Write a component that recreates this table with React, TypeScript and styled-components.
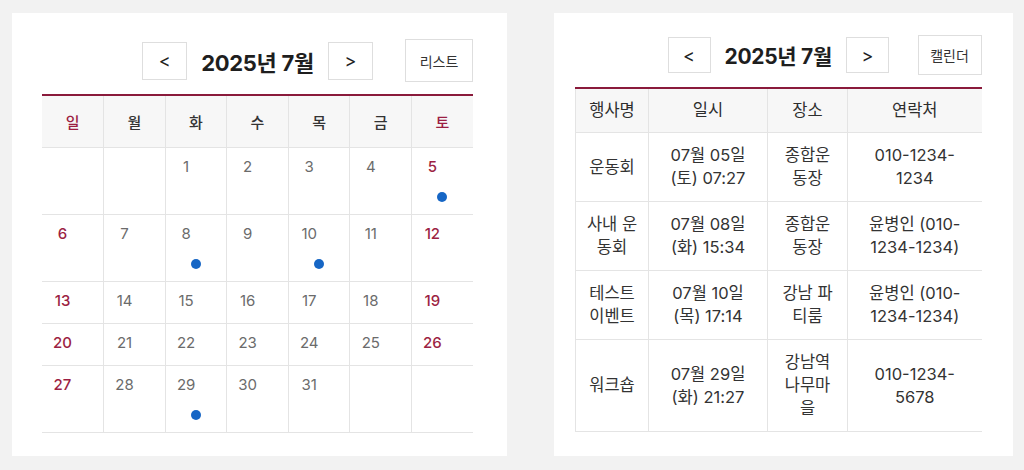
import React from "react";
import styled, { createGlobalStyle } from "styled-components";

const maroon = "#8a1a3b";
const weekendRed = "#9c1f43";
const lineGray = "#e4e4e4";
const headBg = "#f7f7f7";
const dotBlue = "#1666c5";

const GlobalStyle = createGlobalStyle`
  body {
    margin: 0;
    background: #f2f2f2;
    font-family: Inter, "Noto Sans CJK KR", sans-serif;
    color: #333;
  }
`;

const days = ["일", "월", "화", "수", "목", "금", "토"];
const eventDays = [5, 8, 10, 29];

// July 2025 starts on a Tuesday
const weeks: (number | null)[][] = [
  [null, null, 1, 2, 3, 4, 5],
  [6, 7, 8, 9, 10, 11, 12],
  [13, 14, 15, 16, 17, 18, 19],
  [20, 21, 22, 23, 24, 25, 26],
  [27, 28, 29, 30, 31, null, null],
];

const events = [
  { name: "운동회", date: "07월 05일 (토) 07:27", place: "종합운동장", contact: "010-1234-1234" },
  { name: "사내 운동회", date: "07월 08일 (화) 15:34", place: "종합운동장", contact: "윤병인 (010-1234-1234)" },
  { name: "테스트 이벤트", date: "07월 10일 (목) 17:14", place: "강남 파티룸", contact: "윤병인 (010-1234-1234)" },
  { name: "워크숍", date: "07월 29일 (화) 21:27", place: "강남역나무마을", contact: "010-1234-5678" },
];

type NavProps = { switchLabel: string; compact?: boolean };

const Nav = ({ switchLabel, compact }: NavProps) => (
  <NavBar $compact={compact}>
    <span />
    <NavGroup>
      <ArrowButton $compact={compact}>&lt;</ArrowButton>
      <Title $compact={compact}>2025년 7월</Title>
      <ArrowButton $compact={compact}>&gt;</ArrowButton>
    </NavGroup>
    <SwitchButton $compact={compact}>{switchLabel}</SwitchButton>
  </NavBar>
);

const CalendarView = () => (
  <Card $pad="26px 34px 24px 30px">
    <Nav switchLabel="리스트" />
    <CalTable>
      <thead>
        <tr>
          {days.map((d, i) => (
            <DayHead key={d} $weekend={i === 0 || i === 6}>
              {d}
            </DayHead>
          ))}
        </tr>
      </thead>
      <tbody>
        {weeks.map((week, wi) => (
          <tr key={wi}>
            {week.map((day, di) => (
              <DateCell key={di} $weekend={di === 0 || di === 6}>
                {day && <DayNum>{day}</DayNum>}
                {day && eventDays.includes(day) && <Dot />}
              </DateCell>
            ))}
          </tr>
        ))}
      </tbody>
    </CalTable>
  </Card>
);

const ListView = () => (
  <Card $pad="22px 31px 23px 21px">
    <Nav switchLabel="캘린더" compact />
    <ListTable>
      <colgroup>
        <col style={{ width: 73 }} />
        <col style={{ width: 119 }} />
        <col style={{ width: 80 }} />
        <col style={{ width: 134 }} />
      </colgroup>
      <thead>
        <tr>
          <ListHead>행사명</ListHead>
          <ListHead>일시</ListHead>
          <ListHead>장소</ListHead>
          <ListHead>연락처</ListHead>
        </tr>
      </thead>
      <tbody>
        {events.map((ev) => (
          <tr key={ev.name}>
            <ListCell>{ev.name}</ListCell>
            <ListCell>{ev.date}</ListCell>
            <ListCell>{ev.place}</ListCell>
            <ListCell>{ev.contact}</ListCell>
          </tr>
        ))}
      </tbody>
    </ListTable>
  </Card>
);

const App = () => (
  <>
    <GlobalStyle />
    <Page>
      <CalendarView />
      <ListView />
    </Page>
  </>
);

const Page = styled.div`
  display: flex;
  gap: 47px;
  padding: 13px 0 0 12px;
  height: 443px;
`;

const Card = styled.section<{ $pad: string }>`
  background: #fff;
  padding: ${(p) => p.$pad};
  box-sizing: border-box;
  display: flex;
  flex-direction: column;
`;

const NavBar = styled.div<{ $compact?: boolean }>`
  display: grid;
  grid-template-columns: 1fr auto 1fr;
  align-items: center;
  height: ${(p) => (p.$compact ? "40px" : "43px")};
  margin-bottom: 12px;
`;

const NavGroup = styled.div`
  display: flex;
  align-items: center;
  gap: 14px;
`;

const ArrowButton = styled.button<{ $compact?: boolean }>`
  width: ${(p) => (p.$compact ? "43px" : "45px")};
  height: ${(p) => (p.$compact ? "36px" : "38px")};
  background: #fff;
  border: 1px solid #dedede;
  border-radius: 0;
  padding: 0;
  font-family: Inter, sans-serif;
  font-size: 18px;
  color: #222;
`;

const Title = styled.h2<{ $compact?: boolean }>`
  margin: 0;
  font-size: ${(p) => (p.$compact ? "21px" : "22px")};
  font-weight: 700;
  color: #1e1e1e;
  letter-spacing: -0.3px;
  white-space: nowrap;
`;

const SwitchButton = styled.button<{ $compact?: boolean }>`
  justify-self: end;
  width: ${(p) => (p.$compact ? "64px" : "68px")};
  height: ${(p) => (p.$compact ? "40px" : "43px")};
  background: #fff;
  border: 1px solid #dedede;
  border-radius: 0;
  padding: 0;
  font-family: inherit;
  font-size: 14px;
  color: #333;
`;

const CalTable = styled.table`
  width: 431px;
  table-layout: fixed;
  border-collapse: collapse;
  border-top: 2px solid ${maroon};
`;

const DayHead = styled.th<{ $weekend?: boolean }>`
  height: 51px;
  padding: 0;
  background: ${headBg};
  font-size: 15px;
  font-weight: 500;
  color: ${(p) => (p.$weekend ? weekendRed : "#333")};
  border-left: 1px solid ${lineGray};
  border-bottom: 1px solid ${lineGray};
  &:first-child {
    border-left: none;
  }
`;

const DateCell = styled.td<{ $weekend?: boolean }>`
  vertical-align: top;
  text-align: left;
  padding: 9px 8px 12px;
  line-height: 20px;
  font-size: 15px;
  font-weight: ${(p) => (p.$weekend ? 500 : 400)};
  color: ${(p) => (p.$weekend ? weekendRed : "#6b6b6b")};
  border-left: 1px solid ${lineGray};
  border-bottom: 1px solid ${lineGray};
  &:first-child {
    border-left: none;
  }
`;

const DayNum = styled.span`
  display: block;
  width: 25px;
  text-align: center;
`;

const Dot = styled.span`
  display: block;
  width: 10px;
  height: 10px;
  border-radius: 50%;
  background: ${dotBlue};
  margin: 15px auto 0;
`;

const ListTable = styled.table`
  width: 406px;
  table-layout: fixed;
  border-collapse: collapse;
  border-top: 2px solid ${maroon};
  border-left: 1px solid ${lineGray};
`;

const ListHead = styled.th`
  padding: 10px 8px;
  line-height: 23px;
  background: ${headBg};
  font-size: 16.5px;
  font-weight: 400;
  color: #2e2e2e;
  border-left: 1px solid ${lineGray};
  border-bottom: 1px solid ${lineGray};
`;

const ListCell = styled.td`
  padding: 11px 10px;
  line-height: 23px;
  text-align: center;
  vertical-align: middle;
  font-size: 16.5px;
  color: #333;
  border-left: 1px solid ${lineGray};
  border-bottom: 1px solid ${lineGray};
`;

export default App;
